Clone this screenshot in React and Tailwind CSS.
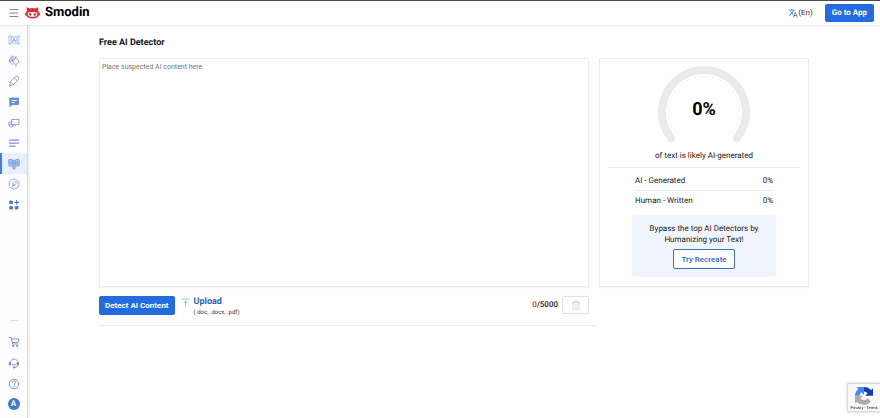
import React from 'react';
import { Menu, Trash2 } from 'lucide-react';
import { MdTranslate } from 'react-icons/md';

const Svg = ({ children }) => (
    <svg className="w-3 h-3" viewBox="0 0 24 24" fill="none" stroke="currentColor" strokeWidth="1.7" strokeLinecap="round" strokeLinejoin="round">
        {children}
    </svg>
);

const tools = [
    {
        name: 'Rewriter',
        color: 'text-[#86a9e6]',
        icon: (
            <Svg>
                <rect x="6" y="6" width="12" height="12" rx="1" />
                <path d="M5 4H2v4M2 11v3M2 17v3h3M19 4h3v4M22 11v3M22 17v3h-3M9 15l3-6 3 6M10 13h4" />
            </Svg>
        ),
    },
    {
        name: 'Plagiarism',
        color: 'text-[#92a3d3]',
        icon: (
            <Svg>
                <path d="M18 7a8 8 0 1 0-8 12M3 9l7 3M6 4l4 8M2 13l8-1M10 2v10M16 4L9 13" />
                <circle cx="16" cy="13" r="5.5" fill="white" />
                <path d="M16 19v4" />
            </Svg>
        ),
    },
    {
        name: 'Writer',
        color: 'text-[#8797c9]',
        icon: (
            <Svg>
                <path d="M3 21l2-8L15 3q3-2 5 1 3 2 1 5L11 19zM5 14l5 5M13 6l5 5" />
            </Svg>
        ),
    },
    {
        name: 'Chat',
        color: 'text-[#648cda]',
        icon: (
            <Svg>
                <path d="M4 4h17v13H8l-4 4z" fill="currentColor" />
                <path d="M8 9h9M8 13h5" stroke="white" />
            </Svg>
        ),
    },
    {
        name: 'Translator',
        color: 'text-[#7e98d8]',
        icon: (
            <Svg>
                <path d="M8 5h14v10h-5l-3 3v-3H8zM8 10H2v7M8 20l4-4" />
                <circle cx="6" cy="17" r="3" />
            </Svg>
        ),
    },
    {
        name: 'Summarizer',
        color: 'text-[#7395dc]',
        icon: (
            <Svg>
                <path d="M3 6h18M3 12h18M3 18h11" strokeWidth="2.5" />
            </Svg>
        ),
    },
    {
        name: 'AI Detector',
        color: 'text-[#7d9fe2]',
        active: true,
        icon: (
            <Svg>
                <path d="M2 3h6l4 3 4-3h6l1 5-1 8h-5l-3 2v4h-4v-4l-3-2H2L1 8z" fill="#a9c0ee" />
                <path d="M5 7v5M9 6v8M12 6v10M15 6v8M19 7v5M5 10h14" />
            </Svg>
        ),
    },
    {
        name: 'Grader',
        color: 'text-[#8b9ccb]',
        icon: (
            <Svg>
                <circle cx="12" cy="12" r="10" strokeDasharray="24 3" />
                <path d="M9 18l1-7 5-5 3 3-5 5-3 1M10 11l4 5" />
            </Svg>
        ),
    },
    {
        name: 'More tools',
        color: 'text-[#4f78c4]',
        icon: (
            <Svg>
                <path d="M4 4h5v5H4zM4 15h5v5H4zM15 15h5v5h-5z" fill="currentColor" />
                <path d="M17.5 3v7M14 6.5h7" strokeWidth="2.5" />
            </Svg>
        ),
    },
];

const support = [
    {
        name: 'Pricing',
        icon: (
            <Svg>
                <path d="M2 3h4l3 13h11M7 6h15l-2 7H9" />
                <circle cx="10" cy="20" r="1.5" />
                <circle cx="18" cy="20" r="1.5" />
            </Svg>
        ),
    },
    {
        name: 'Support',
        icon: (
            <Svg>
                <path d="M4 12a8 8 0 0 1 16 0" />
                <path d="M3 11h2v5H3zM19 11h2v5h-2z" fill="currentColor" />
                <path d="M20 17q-1 4-7 4M8 15q4 3 8 0" />
                <circle cx="12" cy="21" r="1.5" fill="currentColor" />
            </Svg>
        ),
    },
    {
        name: 'Help',
        icon: (
            <Svg>
                <circle cx="12" cy="12" r="9.5" />
                <path d="M9 9q0-3 3-3t3 3q0 2-3 4v1M12 17v1" />
            </Svg>
        ),
    },
];

const Logo = () => (
    <svg className="w-[15px] h-3" viewBox="0 0 30 24">
        <path d="M3 1q4 0 6 2 6-2 12 0 2-2 6-2l-1 6 2 4q2 0 2 3t-2 3q-4 6-13 6T2 17q-2 0-2-3t2-3l2-4z" fill="#dc2c35" />
        <path d="M5 14q0-4 5-4h10q5 0 5 4 0 6-10 6T5 14z" fill="#fbeaeb" />
        <path d="M8 12l5 2-1 3H9zM22 12l-5 2 1 3h3z" fill="#a81828" />
    </svg>
);

const Header = () => (
    <header className="h-[25px] flex items-center justify-between pl-2 pr-[6px] bg-white border-t border-[#4d4d50] shadow-[0_1px_2px_rgba(0,0,0,0.1)] relative z-10">
        <div className="flex items-center">
            <button type="button" aria-label="Menu" className="mr-[5px]">
                <Menu className="w-3 h-3 text-[#888]" strokeWidth={2} />
            </button>
            <a href="#" className="flex items-center gap-[5px] text-[13px] leading-4 font-bold text-black">
                <Logo />
                <span>Smodin</span>
            </a>
        </div>
        <div className="flex items-center gap-3">
            <button type="button" className="flex items-center text-[8px] text-[#333]">
                <MdTranslate className="w-[10px] h-[10px] text-[#3f7ccc]" />
                (En)
            </button>
            <a href="#" className="h-[18px] px-[7px] flex items-center rounded-xs bg-[#246be0] text-white text-[8px] font-bold">Go to App</a>
        </div>
    </header>
);

const Sidebar = () => (
    <aside className="w-7 shrink-0 pt-[5px] pb-1 flex flex-col justify-between bg-[#fdfdff] border-r border-[#dcdcdf] shadow-[1px_0_2px_rgba(0,0,0,0.1)]">
        <nav className="h-[185px] flex flex-col">
            {tools.map((tool) => (
                <a
                    key={tool.name}
                    href="#"
                    aria-label={tool.name}
                    className={`flex-1 flex items-center pl-[6px] border-l-2 ${tool.color} ${tool.active ? 'bg-[#e8eefc] border-[#4a7be0]' : 'border-transparent'}`}
                >
                    {tool.icon}
                </a>
            ))}
        </nav>
        <nav className="flex flex-col items-center text-[#7286bd]">
            <div className="w-2 mb-[10px] border-t border-[#dddde2]"></div>
            {support.map((item) => (
                <a key={item.name} href="#" aria-label={item.name} className="h-[21px] flex items-center">
                    {item.icon}
                </a>
            ))}
            <a href="#" className="w-3 h-3 mt-1 mb-1 flex items-center justify-center rounded-full bg-[#3d7cc9] text-white text-[8px] leading-3 font-bold">A</a>
        </nav>
    </aside>
);

// tick marks on the inner side of the dial, 14 degrees apart
const ticks = Array.from({ length: 19 }, (_, i) => -216 + i * 14);

const Gauge = () => (
    <div className="grid place-items-center">
        <svg className="w-[92px] h-[77px] col-start-1 row-start-1" viewBox="0 0 92 77">
            <path d="M13 72A42 42 0 1 1 79 72" fill="none" stroke="#ebebeb" strokeWidth="8" strokeLinecap="round" />
            {ticks.map((deg) => (
                <path key={deg} d="M81 46h1" stroke="#c9c9c9" strokeWidth="0.6" transform={`rotate(${deg} 46 46)`} />
            ))}
        </svg>
        <p className="col-start-1 row-start-1 pt-[10px] text-lg leading-6 font-bold text-black">0%</p>
    </div>
);

const Results = () => (
    <section className="w-[210px] shrink-0 px-2 pt-[7px] pb-[9px] bg-white border border-[#ececec] shadow-[0_1px_1px_rgba(0,0,0,0.05)]">
        <Gauge />
        <p className="mt-[7px] pb-[5px] text-center text-[8px] leading-3 text-[#222] border-b border-[#ececec]">of text is likely AI-generated</p>
        <dl className="mx-[27px] text-[8px] leading-[11px] text-[#222]">
            <div className="flex justify-between pt-[7px] pb-1 border-b border-[#f0f0f0]">
                <dt>AI - Generated</dt>
                <dd>0%</dd>
            </div>
            <div className="flex justify-between pt-1 pb-[9px]">
                <dt>Human - Written</dt>
                <dd>0%</dd>
            </div>
        </dl>
        <div className="mx-6 py-2 flex flex-col items-center rounded-xs bg-[#f1f5fd] text-center text-[8px] leading-[11px] text-[#222]">
            <p>Bypass the top AI Detectors by<br />Humanizing your Text!</p>
            <button type="button" className="mt-1 h-5 px-[7px] rounded-xs border border-[#3a72be] bg-white text-[#2f66b8] font-medium">Try Recreate</button>
        </div>
    </section>
);

const Toolbar = () => (
    <div className="mt-[9px] mr-[213px] pb-[7px] border-b border-[#ececec]">
        <div className="flex items-start justify-between mr-[7px]">
            <div className="flex items-start">
                <button type="button" className="h-[19px] px-[6px] rounded-xs bg-[#246be0] text-white text-[8px] font-bold">Detect AI Content</button>
                <label htmlFor="upload" className="ml-[6px] flex gap-1">
                    <svg className="w-[9px] h-[9px] mt-[2px] text-[#7fa3e0]" viewBox="0 0 18 18" fill="none" stroke="currentColor" strokeWidth="1.5">
                        <path d="M1 2h16M9 17V6M5 10l4-4 4 4" />
                    </svg>
                    <span className="flex flex-col">
                        <span className="text-[9px] leading-3 font-bold text-[#2c62b3]">Upload</span>
                        <span className="text-[6px] leading-[10px] text-[#333]">(.doc, .docx, .pdf)</span>
                    </span>
                </label>
                <input id="upload" type="file" accept=".doc,.docx,.pdf" className="sr-only" />
            </div>
            <div className="flex items-center gap-1">
                <p className="text-[8px] leading-3 font-medium text-[#222]"><span className="text-[#d9354a]">0</span>/5000</p>
                <button type="button" aria-label="Clear text" className="w-[27px] h-[18px] flex items-center justify-center rounded-xs border border-[#e2e2e2]">
                    <Trash2 className="w-[10px] h-[10px] text-[#c2c2c2]" strokeWidth={1.5} />
                </button>
            </div>
        </div>
    </div>
);

const Recaptcha = () => (
    <a href="#" className="fixed right-0 bottom-[6px] w-[33px] h-[29px] flex flex-col items-center bg-[#f9f9f9] border border-r-0 border-[#dadada] rounded-l-xs shadow-[0_0_3px_rgba(0,0,0,0.2)]">
        <svg className="w-[18px] h-[18px] mt-[3px] shrink-0" viewBox="0 0 64 64">
            <path d="M64 31V4l-7 7A32 32 0 0 0 32 0v16a16 16 0 0 1 13 7l-9 8z" fill="#1c3aa9" />
            <path d="M32 0H5l7 7A32 32 0 0 0 0 31h16a16 16 0 0 1 7-12l9 9z" fill="#4285f4" />
            <path d="M0 31v28l7-7a32 32 0 0 0 50-1L45 40a16 16 0 0 1-26 0l9-9z" fill="#ababab" />
        </svg>
        <span className="text-[4px] leading-[5px] whitespace-nowrap text-[#222]">Privacy - Terms</span>
    </a>
);

const App = () => {
    return (
        <div className="min-h-screen flex flex-col bg-white font-['Roboto',sans-serif] [text-rendering:geometricPrecision]">
            <Header />
            <div className="flex-1 flex">
                <Sidebar />
                <main className="flex-1">
                    <div className="w-5/6 mx-auto pt-3">
                        <h1 className="mb-[9px] text-[9px] leading-3 font-bold text-[#11152b]">Free AI Detector</h1>
                        <div className="flex gap-[10px]">
                            <textarea
                                aria-label="Text to check"
                                placeholder="Place suspected AI content here"
                                className="flex-1 min-w-0 resize-none px-[2px] py-[2px] bg-white border border-[#ececec] shadow-[0_1px_1px_rgba(0,0,0,0.05)] outline-none text-[7px] leading-3 placeholder:text-[#757575]"
                            ></textarea>
                            <Results />
                        </div>
                        <Toolbar />
                    </div>
                </main>
            </div>
            <Recaptcha />
        </div>
    );
};

export default App;
